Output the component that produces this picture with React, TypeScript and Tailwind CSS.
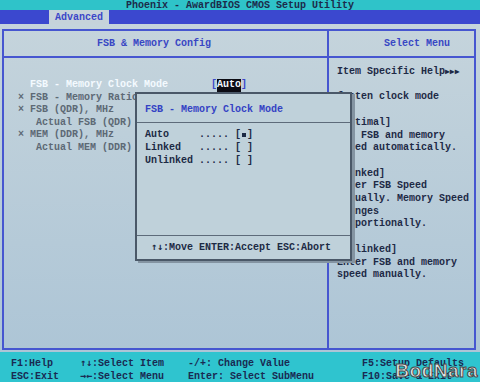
import React from "react";

const mono = "font-['Liberation_Mono','DejaVu_Sans_Mono',monospace]";
const arrow = "font-['DejaVu_Sans_Mono',monospace]";

const leftRows: { text: string; cls: string }[] = [
  { text: "  FSB - Memory Clock Mode", cls: "text-[#f4faff]" },
  { text: "× FSB - Memory Ratio", cls: "text-[#5d6975]" },
  { text: "× FSB (QDR), MHz", cls: "text-[#5d6975]" },
  { text: "   Actual FSB (QDR)", cls: "text-[#5d6975]" },
  { text: "× MEM (DDR), MHz", cls: "text-[#5d6975]" },
  { text: "   Actual MEM (DDR)", cls: "text-[#5d6975]" },
];

const helpLines = [
  "fasten clock mode",
  "",
  "[Optimal]",
  "The FSB and memory",
  "speed automatically.",
  "",
  "[Linked]",
  "Enter FSB Speed",
  "manually. Memory Speed",
  "changes",
  "proportionally.",
  "",
  "[Unlinked]",
  "Enter FSB and memory",
  "speed manually.",
];

function Arrows({ a }: { a: string }) {
  return <span className={`${arrow} text-[10px] leading-[10px]`}>{a}</span>;
}

export default function App() {
  return (
    <div
      className={`relative w-[480px] h-[382px] overflow-hidden flex flex-col ${mono} text-[10px] font-bold`}
    >
      {/* Title bar */}
      <div className="h-[10px] bg-[#2fc3c9] text-center leading-[11px] text-[#1c2a4a] whitespace-pre">
        Phoenix - AwardBIOS CMOS Setup Utility
      </div>
      {/* Menu bar */}
      <div className="h-[14px] bg-[#3b48cf] flex">
        <div className="ml-[49px] w-[60px] bg-[#c6d3da] text-[#3a46c8] text-center leading-[15px]">
          Advanced
        </div>
      </div>
      {/* Main */}
      <div className="flex-1 flex bg-gradient-to-b from-[#c5d4dc] to-[#adc5d6] pt-[5px] pl-[2px] pr-[4px] pb-[2px]">
        <div className="flex-1 border-2 border-[#4656d0] grid grid-cols-[325px_1fr]">
          {/* Left column */}
          <div className="border-r-2 border-[#4656d0] flex flex-col">
            <div className="h-[27px] border-b-2 border-[#4656d0] pl-[93px] leading-[26px] text-[#3846c4]">
              FSB &amp; Memory Config
            </div>
            <div className="pt-[21px] pl-[14px] leading-[12.6px] whitespace-pre">
              {leftRows.map((r, i) => (
                <div key={i} className="flex">
                  <div className={`${i === 0 ? "w-[193px]" : ""} ${r.cls}`}>{r.text}</div>
                  {i === 0 && (
                    <div className="flex text-[#3a46c8]">
                      <span>[</span>
                      <span className="bg-[#0c0c14] text-[#f4f8ff]">Auto</span>
                      <span>]</span>
                    </div>
                  )}
                </div>
              ))}
            </div>
          </div>
          {/* Right column */}
          <div className="flex flex-col">
            <div className="h-[27px] border-b-2 border-[#4656d0] pl-[55px] leading-[26px] text-[#3846c4]">
              Select Menu
            </div>
            <div className="pt-[8px] pl-[8px] leading-[12.7px] whitespace-pre text-[#1e2a46]">
              <div>
                Item Specific Help<span className={`${arrow} text-[8px]`}>▶▶▶</span>
              </div>
              <div>&nbsp;</div>
              {helpLines.map((l, i) => (
                <div key={i}>{l === "" ? "\u00a0" : l}</div>
              ))}
            </div>
          </div>
        </div>
      </div>
      {/* Footer */}
      <div className="h-[30px] bg-[#2fc4cf] pt-[6px] pl-[11px] leading-[12.6px] text-[#1a2a52] whitespace-pre">
        <div className="flex h-[12.6px]">
          <div className="w-[69px]">F1:Help</div>
          <div className="w-[108px]">
            <Arrows a="↑↓" />:Select Item
          </div>
          <div className="w-[174px]">-/+: Change Value</div>
          <div>F5:Setup Defaults</div>
        </div>
        <div className="flex h-[12.6px]">
          <div className="w-[69px]">ESC:Exit</div>
          <div className="w-[108px]">
            <Arrows a="→←" />:Select Menu
          </div>
          <div className="w-[174px]">Enter: Select SubMenu</div>
          <div>F10:Save &amp; Exit</div>
        </div>
      </div>

      {/* Popup dialog */}
      <div className="absolute left-[135px] top-[92px] w-[217px] h-[169px] border-2 border-[#4a5868] bg-[#bfd1da] flex flex-col shadow-[3px_2px_0_#8494a2]">
        <div className="h-[29px] border-b border-[#5d6b7a] pl-[8px] leading-[31px] text-[#3442c4]">
          FSB - Memory Clock Mode
        </div>
        <div className="flex-1 pt-[6px] pl-[8px] leading-[12.8px] whitespace-pre text-[#1c2a44]">
          <div className="flex">
            <span>Auto     ..... [</span>
            <span className="inline-flex w-[6px] items-center justify-center">
              <span className="block w-[4px] h-[4px] bg-[#1c2a44]" />
            </span>
            <span>]</span>
          </div>
          <div>Linked   ..... [ ]</div>
          <div>Unlinked ..... [ ]</div>
        </div>
        <div className="h-[24px] border-t border-[#5d6b7a] pl-[14px] leading-[24px] whitespace-pre text-[#1c2a44]">
          <Arrows a="↑↓" />:Move ENTER:Accept ESC:Abort
        </div>
      </div>

      {/* Watermark */}
      <div className="absolute right-[2px] bottom-[1px] font-['Liberation_Sans',Arial,sans-serif] text-[19px] font-bold leading-[20px] text-[#e6e6e6] [-webkit-text-stroke:1px_#4a4a4a] tracking-[0.5px]">
        BodNara
      </div>
    </div>
  );
}
